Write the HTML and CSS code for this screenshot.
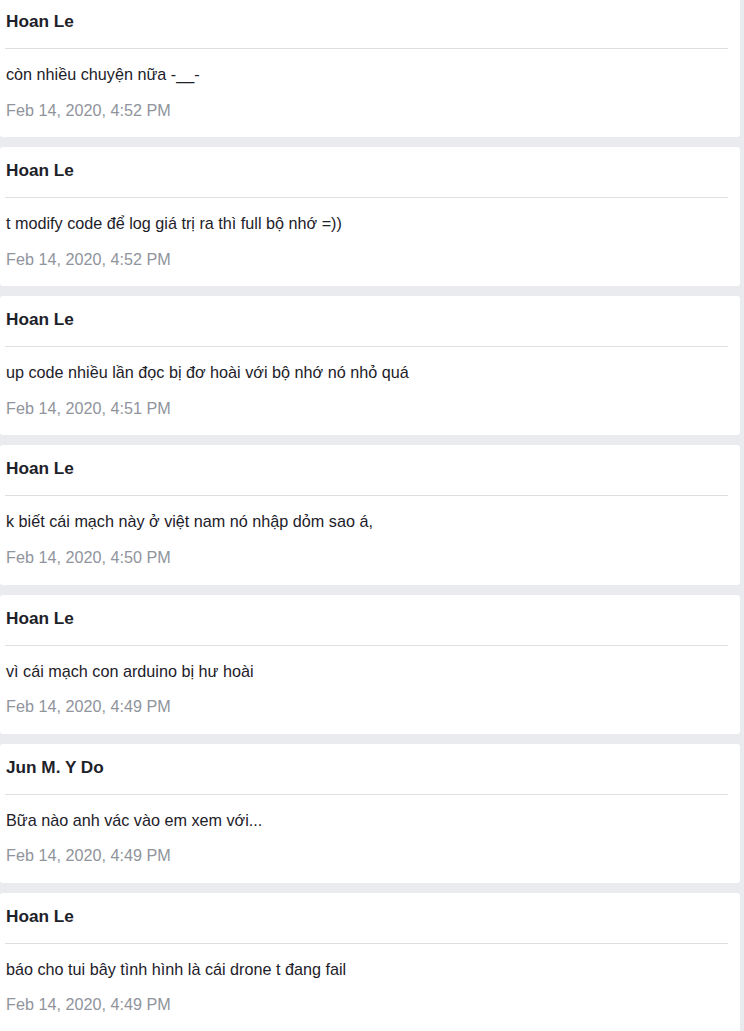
FILE: index.html
```html
<!DOCTYPE html>
<html lang="vi">
<head>
<meta charset="utf-8">
<title>Messages</title>
<link rel="stylesheet" href="styles.css">
</head>
<body>
<div class="list">
  <div class="card">
    <div class="name">Hoan Le</div>
    <div class="msg">còn nhiều chuyện nữa -__-</div>
    <div class="date">Feb 14, 2020, 4:52 PM</div>
  </div>
  <div class="card">
    <div class="name">Hoan Le</div>
    <div class="msg">t modify code để log giá trị ra thì full bộ nhớ =))</div>
    <div class="date">Feb 14, 2020, 4:52 PM</div>
  </div>
  <div class="card">
    <div class="name">Hoan Le</div>
    <div class="msg">up code nhiều lần đọc bị đơ hoài với bộ nhớ nó nhỏ quá</div>
    <div class="date">Feb 14, 2020, 4:51 PM</div>
  </div>
  <div class="card">
    <div class="name">Hoan Le</div>
    <div class="msg">k biết cái mạch này ở việt nam nó nhập dỏm sao á,</div>
    <div class="date">Feb 14, 2020, 4:50 PM</div>
  </div>
  <div class="card">
    <div class="name">Hoan Le</div>
    <div class="msg">vì cái mạch con arduino bị hư hoài</div>
    <div class="date">Feb 14, 2020, 4:49 PM</div>
  </div>
  <div class="card">
    <div class="name">Jun M. Y Do</div>
    <div class="msg">Bữa nào anh vác vào em xem với...</div>
    <div class="date">Feb 14, 2020, 4:49 PM</div>
  </div>
  <div class="card">
    <div class="name">Hoan Le</div>
    <div class="msg">báo cho tui bây tình hình là cái drone t đang fail</div>
    <div class="date">Feb 14, 2020, 4:49 PM</div>
  </div>
</div>
</body>
</html>
```

FILE: styles.css
```css
html, body {
  margin: 0;
  padding: 0;
  background: #e9ebee;
  font-family: "Liberation Sans", Arial, sans-serif;
  color: #1d2129;
}

.list {
  display: flex;
  flex-direction: column;
  gap: 10px;
  width: 740px;
  margin-top: -2px;
}

.card {
  background: #ffffff;
  border-radius: 3px;
  padding: 0 12px 17.67px 5px;
}

.name {
  font-weight: bold;
  font-size: 17.2px;
  line-height: 20px;
  padding: 13px 0 17px 1px;
  border-bottom: 1px solid #dddfe2;
}

.msg {
  font-size: 16.2px;
  line-height: 20px;
  margin-top: 15px;
  padding-left: 1px;
}

.date {
  font-size: 16.2px;
  line-height: 20px;
  margin-top: 15.5px;
  padding-left: 1px;
  color: #90949c;
}
```
